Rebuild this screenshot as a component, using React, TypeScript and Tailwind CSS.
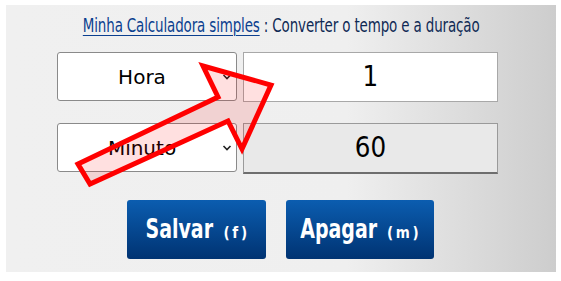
import React from "react";

const sans = "font-['DejaVu_Sans',sans-serif]";

function Chevron() {
  return (
    <svg width="10" height="7" viewBox="0 0 10 7" className="absolute right-[4px] top-1/2 -translate-y-1/2">
      <path d="M1.5 1.5 L5 5 L8.5 1.5" fill="none" stroke="#222" strokeWidth="1.6" />
    </svg>
  );
}

function SelectBox({ label }: { label: string }) {
  return (
    <div className="relative w-[180px] h-[49px] bg-white border border-[#8a8a8a] rounded-[3px] flex items-center justify-center pr-[10px]">
      <span className={`${sans} text-[20px] text-black leading-none`}>{label}</span>
      <Chevron />
    </div>
  );
}

function Btn({ label, hint, w, mx }: { label: string; hint: string; w: string; mx: string }) {
  return (
    <button className={`${w} h-[59px] rounded-[3px] bg-[linear-gradient(to_bottom,#0b5db0,#003372)] text-white flex items-baseline justify-center gap-[8px] pt-[14px] ${sans}`}>
      <span className={`text-[26px] leading-[30px] font-bold [transform:scaleX(0.73)] ${mx}`}>{label}</span>
      <span className="text-[15px] font-bold tracking-[3px] -mr-[3px] [transform:scaleX(0.9)]">{hint}</span>
    </button>
  );
}

export default function App() {
  return (
    <div className="relative w-[561px] h-[281px] bg-white overflow-hidden">
      <div className="ml-[6px] mt-[5px] w-[550px] h-[267px] bg-[linear-gradient(to_right,#f0f0f0_0%,#efefef_62%,#cdcdcd_100%)] flex flex-col">
        <div className={`h-[40px] flex items-center justify-center ${sans}`}>
          <span className="inline-block [transform:scaleX(0.708)] whitespace-nowrap text-[19px] tracking-[-0.2px]">
            <a className="text-[#0b3f8f] underline underline-offset-[3px]">Minha Calculadora simples</a>
            <span className="text-[#0f2a55] whitespace-pre"> : Converter o tempo e a duração</span>
          </span>
        </div>
        <div className="pl-[51px] pt-[7px] flex flex-col gap-[21px]">
          <div className="flex gap-[6px] items-start">
            <SelectBox label="Hora" />
            <div className={`w-[255px] h-[50px] bg-white border border-[#a8a8a8] flex items-center justify-center ${sans}`}>
              <span className="text-[29px] text-black [transform:scaleX(0.85)]">1</span>
            </div>
          </div>
          <div className="flex gap-[6px] items-start">
            <SelectBox label="Minuto" />
            <div className={`w-[255px] h-[51px] bg-[#e9e9e9] border border-[#9a9a9a] border-b-2 border-b-[#6e6e6e] flex items-center justify-center ${sans}`}>
              <span className="text-[29px] text-black [transform:scaleX(0.85)]">60</span>
            </div>
          </div>
        </div>
        <div className="pl-[121px] pt-[26px] flex gap-[20px]">
          <Btn label="Salvar" hint="(f)" w="w-[139px]" mx="-mx-[12px]" />
          <Btn label="Apagar" hint="(m)" w="w-[148px]" mx="-mx-[14px]" />
        </div>
      </div>
      <svg className="absolute left-0 top-0 pointer-events-none" width="561" height="281" viewBox="0 0 561 281">
        <polygon
          points="78,164 218,97 203,66 271,85 242,149 228,121 90,184"
          fill="rgba(255,0,0,0.12)"
          stroke="#ff0000"
          strokeWidth="5"
          strokeLinejoin="miter"
        />
      </svg>
    </div>
  );
}
